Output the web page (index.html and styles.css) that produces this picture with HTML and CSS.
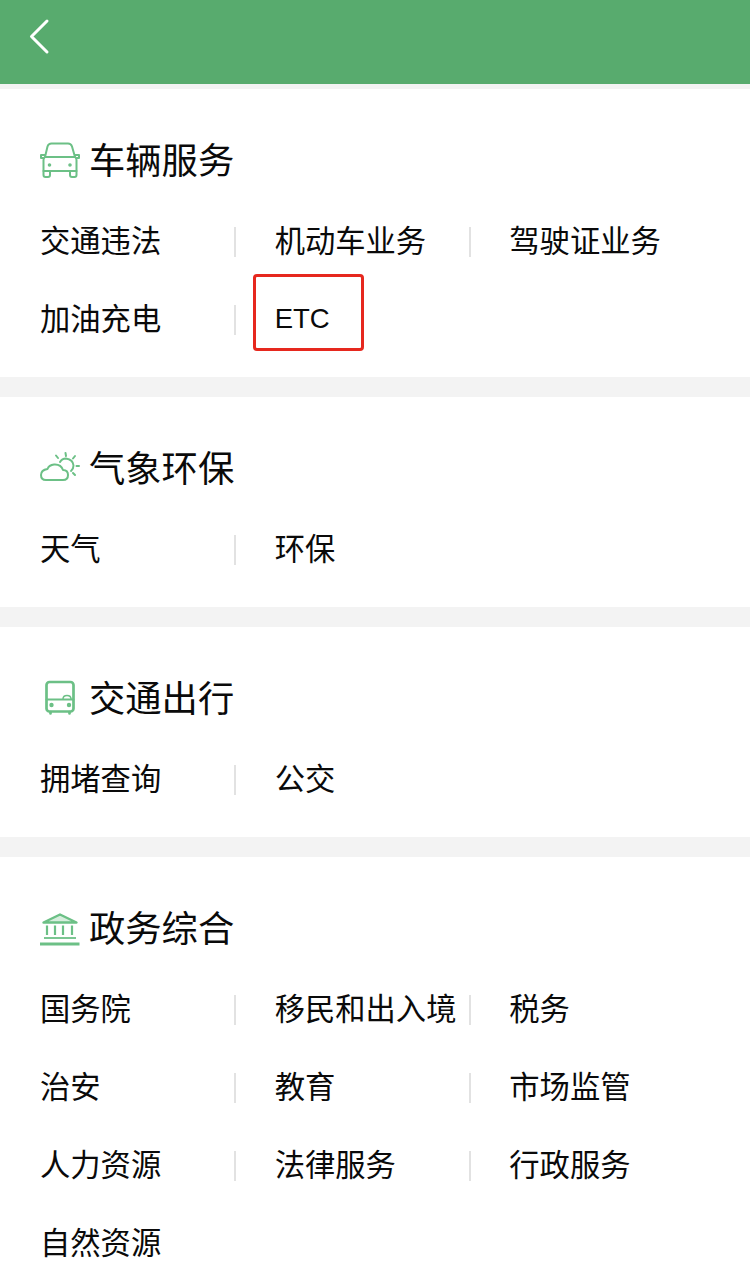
FILE: index.html
```html
<!DOCTYPE html>
<html lang="zh-CN">
<head>
    <meta charset="UTF-8">
    <meta name="viewport" content="width=device-width, initial-scale=1.0">
    <title>城市服务</title>
    <link rel="stylesheet" href="styles.css">
</head>

<body>

    <header class="top-bar">
        <svg class="back-icon" width="22" height="37" viewBox="0 0 22 37">
            <path d="M19 3 L3.500 18.500 L19 34" fill="none" stroke="#fff" stroke-width="3" stroke-linecap="round" stroke-linejoin="round"/>
        </svg>
    </header>

    <section class="group">
        <h2 class="group-title">
            <svg class="group-icon" viewBox="0 0 40 40" fill="none" stroke="#6cc086" stroke-width="2" stroke-linecap="round" stroke-linejoin="round">
                <path d="M5 17 L7.500 6.500 Q8.500 3.500 11.500 3.500 H28 Q31 3.500 32 6.500 L35 17 Z"/>
                <path d="M5 15 H1 V18 H3.500 M35 15 H39 V18 H36.500"/>
                <path d="M5 17 Q3.500 18 3.500 20 V31 H36.500 V20 Q36.500 18 35 17"/>
                <path d="M3.500 31 V35 Q3.500 37 5.500 37 H8 Q10 37 10 35 V31 M30 31 V35 Q30 37 32 37 H34.500 Q36.500 37 36.500 35 V31"/>
                <circle cx="9.500" cy="25" r="0.800" fill="#6cc086"/>
                <circle cx="30" cy="25" r="0.800" fill="#6cc086"/>
            </svg>
            <span class="group-name">车辆服务</span>
        </h2>
        <div class="links">
            <div class="link">交通违法</div>
            <div class="link">机动车业务</div>
            <div class="link">驾驶证业务</div>
            <div class="link">加油充电</div>
            <div class="link link-marked">ETC</div>
        </div>
    </section>

    <section class="group">
        <h2 class="group-title">
            <svg class="group-icon" viewBox="0 0 40 40" fill="none" stroke="#6cc086" stroke-width="2" stroke-linecap="round" stroke-linejoin="round">
                <path d="M6 32 H23 Q28 32 28 27 Q28 22 23 22 Q21 16 14 16.500 Q9 17 7.500 21 Q1 22 1 27 Q1 32 6 32 Z"/>
                <path d="M20 14 Q22 10.500 26 10.500 Q33 11.500 33.500 17.500 Q33.500 21 31 23"/>
                <path d="M25.500 5 L26 8 M16 7.500 L18 10 M35 8 L33 10.500 M39 18 H36.500 M35 27 L33 25"/>
            </svg>
            <span class="group-name">气象环保</span>
        </h2>
        <div class="links">
            <div class="link">天气</div>
            <div class="link">环保</div>
        </div>
    </section>

    <section class="group">
        <h2 class="group-title">
            <svg class="group-icon" viewBox="0 0 40 40" fill="none" stroke="#6cc086" stroke-width="2.700" stroke-linecap="round" stroke-linejoin="round">
                <rect x="6.500" y="4" width="27" height="29.500" rx="3"/>
                <path d="M6.500 21.500 H33.500" stroke-width="1.800"/>
                <path d="M23 21 Q23 17.500 27 17.500 Q31 17.500 31 21" stroke-width="1.500"/>
                <path d="M10.500 34 V35.500 M29.500 34 V35.500"/>
                <circle cx="11.500" cy="27" r="2.200" fill="#6cc086" stroke="none"/>
                <circle cx="29" cy="27" r="2.200" fill="#6cc086" stroke="none"/>
            </svg>
            <span class="group-name">交通出行</span>
        </h2>
        <div class="links">
            <div class="link">拥堵查询</div>
            <div class="link">公交</div>
        </div>
    </section>

    <section class="group">
        <h2 class="group-title">
            <svg class="group-icon" viewBox="0 0 40 40" fill="none" stroke="#6cc086" stroke-linejoin="round">
                <path d="M3.500 14.500 L20 6.500 L36.500 14.500 Z" stroke-width="2.400" fill="#d6eedd"/>
                <path d="M7 17.500 V27 M15 17.500 V27 M23 17.500 V27 M32 17.500 V27" stroke-width="2.200"/>
                <path d="M4 30 H36" stroke-width="1.800"/>
                <path d="M0 36 H39.500" stroke-width="2.800"/>
            </svg>
            <span class="group-name">政务综合</span>
        </h2>
        <div class="links">
            <div class="link">国务院</div>
            <div class="link">移民和出入境</div>
            <div class="link">税务</div>
            <div class="link">治安</div>
            <div class="link">教育</div>
            <div class="link">市场监管</div>
            <div class="link">人力资源</div>
            <div class="link">法律服务</div>
            <div class="link">行政服务</div>
            <div class="link">自然资源</div>
        </div>
    </section>

</body>
</html>
```

FILE: styles.css
```css
body {
    margin: 0;
    height: 1287px;
    overflow: hidden;
    background-color: #f3f3f3;
    color: #0a0a0a;
    font-family: "Liberation Sans", "Noto Sans CJK SC", sans-serif;
}
.top-bar {
    height: 84px;
    margin-bottom: 5px;
    background-color: #58ab6e;
    display: flex;
    align-items: flex-start;
    padding: 18px 0 0 28px;
    box-sizing: border-box;
}
.group {
    background-color: white;
    padding: 45px 0 20px 40px;
    margin-bottom: 20px;
}
.group-title {
    margin: 0 0 15px;
    height: 52px;
    display: flex;
    align-items: center;
    gap: 9px;
    font-size: 36.300px;
    font-weight: 400;
    line-height: 52px;
}
.group-name {
    padding-top: 4px;
}
.group-icon {
    width: 40px;
    height: 40px;
}
.links {
    display: grid;
    grid-template-columns: repeat(3, 234.67px);
    grid-auto-rows: 78px;
}
.link {
    position: relative;
    display: flex;
    align-items: center;
    width: 195px;
    padding-bottom: 2px;
    box-sizing: border-box;
    font-size: 30.300px;
    white-space: nowrap;
}
.link::after {
    content: "";
    position: absolute;
    right: -1px;
    top: 26px;
    width: 2px;
    height: 30px;
    background-color: #e2e2e2;
}
.link:nth-child(3n)::after,
.link:last-child::after {
    display: none;
}
.link-marked {
    padding: 2px 0 0;
    font-size: 27.500px;
}
.link-marked::before {
    content: "";
    position: absolute;
    left: -22px;
    top: -5px;
    width: 105px;
    height: 71px;
    border: 3px solid #e6281e;
    border-radius: 4px;
}
```
